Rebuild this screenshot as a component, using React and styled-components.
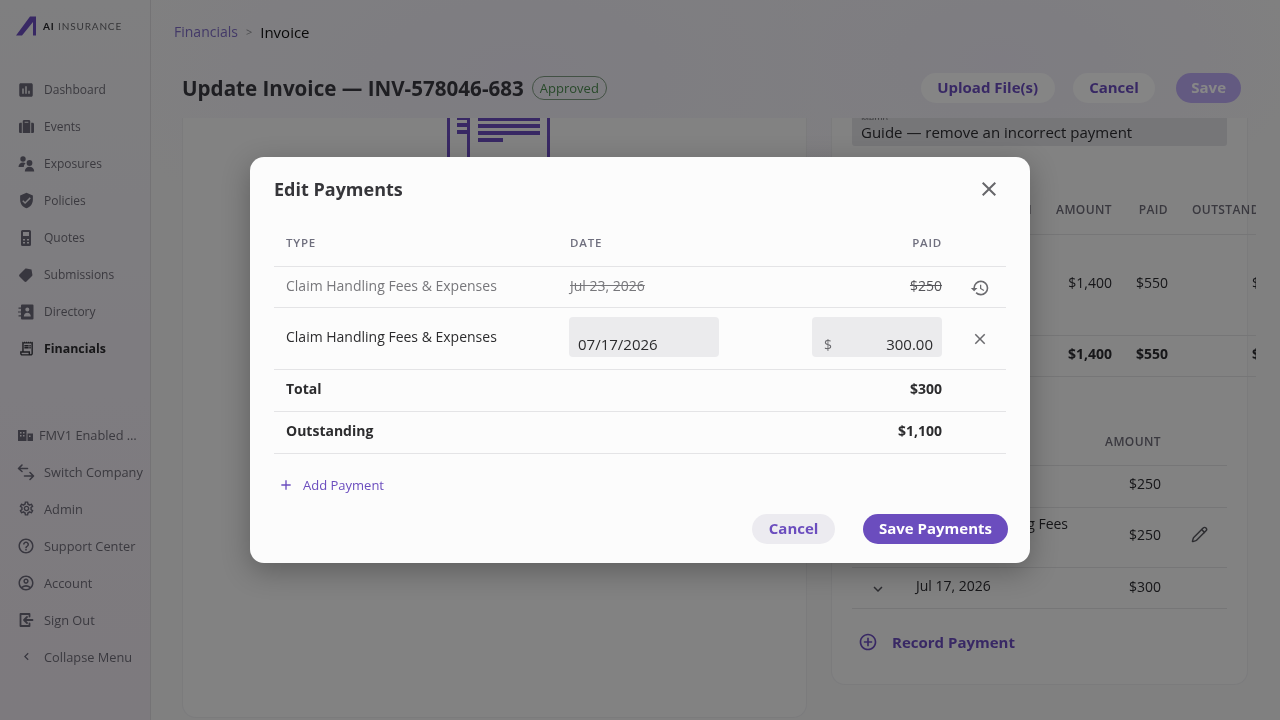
import React from 'react';
import styled, { createGlobalStyle } from 'styled-components';
import {
  MdAssessment,
  MdVerifiedUser,
  MdOutlineReceiptLong,
  MdOutlineSettings,
  MdHelpOutline,
  MdOutlineAccountCircle,
  MdHistory,
  MdClose,
  MdExpandMore,
  MdAddCircleOutline,
  MdAdd,
  MdChevronLeft,
  MdLabel,
} from 'react-icons/md';
import { FaSuitcase } from 'react-icons/fa';
import { LuPencil } from 'react-icons/lu';

const PURPLE = '#6b4dbe';

const GlobalStyle = createGlobalStyle`
  html, body {
    margin: 0;
    padding: 0;
    height: 100%;
    overflow: hidden;
  }
  body {
    font-family: "Open Sans", "Noto Sans", "Liberation Sans", sans-serif;
    background: #f1f1f3;
  }
  * {
    box-sizing: border-box;
  }
`;

const Shell = styled.div`
  display: flex;
  width: 1280px;
  height: 720px;
  overflow: hidden;
  background:
    radial-gradient(ellipse 420px 200px at 520px 70px, #eeebf5 0%, transparent 100%),
    radial-gradient(ellipse 300px 160px at 1000px 60px, #eeebf5 0%, transparent 100%),
    #f1f1f2;
`;

const Sidebar = styled.aside`
  flex: 0 0 151px;
  display: flex;
  flex-direction: column;
  border-right: 1px solid #dcdade;
  background: linear-gradient(180deg, #f0f0f1 0%, #eeeaf1 55%, #ede6ee 100%);
`;

const Brand = styled.div`
  display: flex;
  align-items: center;
  gap: 7px;
  height: 71px;
  padding: 0 0 20px 16px;
  will-change: transform;
`;

const BrandName = styled.span`
  font-family: "Lato", sans-serif;
  font-size: 10px;
  letter-spacing: 0.85px;
  color: #66666c;
  white-space: nowrap;

  b {
    font-weight: 700;
    color: #26262c;
  }
`;

const Nav = styled.nav`
  display: flex;
  flex-direction: column;
  margin-top: ${(p) => p.$top || 0}px;
  will-change: transform;
`;

const NavItem = styled.a`
  display: flex;
  align-items: center;
  height: 37px;
  padding-left: ${(p) => (p.$compact ? 17 : 18)}px;
  gap: ${(p) => (p.$compact ? 6 : 10)}px;
  font-size: ${(p) => (p.$large ? 12.8 : p.$active ? 12.4 : 12)}px;
  font-weight: ${(p) => (p.$active ? 700 : 400)};
  color: ${(p) => (p.$active ? '#2c2c30' : '#6f6d78')};
  white-space: nowrap;

  svg {
    flex: 0 0 auto;
    color: ${(p) => (p.$active ? '#3c3c44' : '#6a6878')};
  }
`;

const IconSlot = styled.span`
  display: flex;
  align-items: center;
  justify-content: center;
  flex: 0 0 16px;
  width: 16px;
  height: 16px;
`;

const Main = styled.main`
  flex: 1;
  min-width: 0;
  display: flex;
  flex-direction: column;
  will-change: transform;
`;

const Breadcrumb = styled.div`
  display: flex;
  align-items: center;
  height: 64px;
  padding: 0 0 1px 23px;
  font-size: 14px;
`;

const CrumbLink = styled.span`
  color: #7f6cc4;
`;

const CrumbSep = styled.span`
  margin: 0 8px;
  font-size: 11px;
  color: #8d8d94;
`;

const CrumbCurrent = styled.span`
  font-size: 15px;
  color: #111;
`;

const PageHeader = styled.header`
  display: flex;
  align-items: center;
  height: 54px;
  padding: 0 39px 6px 31px;
`;

const PageTitle = styled.h1`
  margin: 0;
  font-size: 20.6px;
  font-weight: 700;
  color: #3a3a40;
  white-space: nowrap;
`;

const StatusBadge = styled.span`
  margin-left: 8px;
  padding: 0 7px;
  height: 24px;
  line-height: 22px;
  font-size: 13px;
  color: #4c8a50;
  border: 1px solid #7e9a80;
  border-radius: 12px;
`;

const HeaderActions = styled.div`
  display: flex;
  align-items: center;
  margin-left: auto;
`;

const PillButton = styled.button`
  height: 30px;
  margin-left: ${(p) => p.$gap || 0}px;
  padding: 0 ${(p) => p.$pad || 16.5}px 2px;
  border: none;
  border-radius: 15px;
  font-family: inherit;
  font-size: 15px;
  font-weight: 700;
  white-space: nowrap;
  color: ${(p) => (p.$primary ? '#fff' : PURPLE)};
  background: ${(p) => (p.$primary ? PURPLE : '#ecebf0')};
`;

const HeaderPill = styled(PillButton)`
  background: #fbfbfc;
`;

const DisabledSave = styled(PillButton)`
  color: #fff;
  background: #bcaaf4;
`;

const Scroller = styled.div`
  flex: 1;
  min-height: 0;
  overflow: hidden;
  display: flex;
  align-items: flex-start;
  gap: 24px;
  padding-left: 31px;
`;

const PreviewCard = styled.section`
  flex: 0 0 625px;
  height: 600px;
  display: flex;
  justify-content: center;
  align-items: flex-start;
  padding-left: 8px;
  background: #f5f5f6;
  border: 1px solid #e9e9eb;
  border-top: none;
  border-radius: 0 0 14px 14px;
`;

const DetailCard = styled.section`
  flex: 0 0 417px;
  min-width: 0;
  height: 567px;
  padding: 0 20px;
  background: #f5f5f6;
  border: 1px solid #e9e9eb;
  border-top: none;
  border-radius: 0 0 14px 14px;
`;

const MemoField = styled.div`
  height: 28px;
  padding-left: 9px;
  background: #dfdfe3;
  border-radius: 0 0 3px 3px;
  font-size: 15px;
  line-height: 24px;
  color: #2c2c30;
`;

const MemoLabel = styled.span`
  display: block;
  height: 2px;
  overflow: hidden;
  font-size: 9px;
  line-height: 2px;
  color: #6a6a70;
`;

const ChargesWrap = styled.div`
  width: 404px;
  margin-top: 39px;
  overflow: hidden;
`;

const ChargesRow = styled.div`
  display: grid;
  grid-template-columns: 180px 56px 32px 92px;
  column-gap: 24px;
  align-items: center;
  width: 440px;
  height: ${(p) => p.$height}px;
  padding-bottom: ${(p) => p.$lift || 0}px;
  border-bottom: 1px solid #dfdfe1;
  font-size: 14px;
  font-weight: ${(p) => (p.$bold ? 700 : 400)};
  color: #2c2c30;
`;

const ColHead = styled.span`
  justify-self: ${(p) => p.$align || 'end'};
  font-size: 12px;
  font-weight: 600;
  letter-spacing: 0.4px;
  white-space: nowrap;
  color: #6e6c78;
`;

const Amount = styled.span`
  justify-self: end;
  white-space: nowrap;
`;

const PaymentsTable = styled.div`
  margin-top: 39px;
`;

const PaymentRow = styled.div`
  display: grid;
  grid-template-columns: 64px 1fr 59px 66px;
  align-items: center;
  height: ${(p) => p.$height}px;
  padding-top: ${(p) => p.$drop || 0}px;
  padding-bottom: ${(p) => p.$lift || 0}px;
  border-bottom: 1px solid #dfdfe1;
  font-size: 14px;
  color: #2c2c30;
`;

const PaymentLabel = styled.span`
  font-size: 14px;
  line-height: 20px;
  padding-left: ${(p) => p.$indent || 0}px;
`;

const ToggleCell = styled.span`
  display: flex;
  padding-left: 17px;
  padding-top: 5px;
  color: #55555c;
`;

const EditCell = styled.span`
  display: flex;
  padding-left: 30px;
  color: #55555c;
`;

const RecordPayment = styled.div`
  display: flex;
  align-items: center;
  gap: 14px;
  height: 70px;
  padding: 0 0 4px 6px;
  font-size: 15px;
  font-weight: 700;
  color: ${PURPLE};
`;

const Overlay = styled.div`
  position: fixed;
  inset: 0;
  display: flex;
  align-items: center;
  justify-content: center;
  background: rgba(0, 0, 0, 0.47);
`;

const Dialog = styled.div`
  width: 780px;
  padding: 16px 24px 19px;
  background: #fcfcfc;
  border-radius: 14px;
  box-shadow: 0 8px 28px rgba(0, 0, 0, 0.28);
  will-change: transform;
`;

const DialogHeader = styled.div`
  display: flex;
  align-items: center;
  justify-content: space-between;
  height: 32px;
  padding-right: 5px;
`;

const DialogTitle = styled.h2`
  margin: 0;
  font-size: 18px;
  font-weight: 700;
  color: #36363a;
`;

const CloseButton = styled.span`
  display: flex;
  color: #66666a;
`;

const Row = styled.div`
  display: grid;
  grid-template-columns: 284px 150px 1fr 64px;
  align-items: center;
  height: ${(p) => p.$height}px;
  padding: 0 0 4px 12px;
  border-bottom: 1px solid #e4e4e6;
  font-size: 14px;
  font-weight: ${(p) => (p.$bold ? 700 : 400)};
  color: ${(p) => (p.$muted ? '#77777b' : '#2c2c2e')};
`;

const HeadRow = styled(Row)`
  margin-top: 16px;
  padding-bottom: 3px;
`;

const DialogHead = styled.span`
  justify-self: ${(p) => p.$align || 'start'};
  font-size: 11.5px;
  font-weight: 600;
  letter-spacing: 0.8px;
  color: #6f6f7e;
`;

const Struck = styled.span`
  justify-self: ${(p) => p.$align || 'start'};
  text-decoration: line-through;
  color: ${(p) => p.$color || '#77777b'};
`;

const PaidCell = styled.span`
  justify-self: end;
`;

const ActionCell = styled.span`
  display: flex;
  justify-content: center;
  padding-left: 12px;
  padding-top: ${(p) => p.$drop || 0}px;
  color: #6a6a6e;
`;

const DateInput = styled.input`
  width: 150px;
  height: 40px;
  margin-left: -1px;
  padding: 15px 9px 0;
  border: none;
  border-radius: 4px;
  outline: none;
  background: #ebebed;
  font-family: inherit;
  font-size: 15px;
  color: #2c2c2e;
`;

const MoneyBox = styled.label`
  justify-self: end;
  display: flex;
  align-items: center;
  width: 130px;
  height: 40px;
  padding: 15px 9px 0 12px;
  border-radius: 4px;
  background: #ebebed;
  font-size: 14px;
  color: #6a6a6e;
`;

const MoneyInput = styled.input`
  flex: 1;
  min-width: 0;
  border: none;
  outline: none;
  padding: 0;
  background: transparent;
  text-align: right;
  font-family: inherit;
  font-size: 15px;
  color: #2c2c2e;
`;

const AddPayment = styled.div`
  display: flex;
  align-items: center;
  gap: 9px;
  height: 44px;
  margin-top: 9px;
  padding-left: 4px;
  font-size: 13px;
  color: ${PURPLE};
`;

const DialogFooter = styled.div`
  display: flex;
  justify-content: flex-end;
  margin-top: 7px;
  margin-right: -2px;
`;

const Logo = () => (
  <svg width="20" height="20" viewBox="0 0 20 20">
    <path d="M0 19.5 L14 0.5 H20 V19.5 H17 V6 L6 19.5 Z" fill="#6b4dbe" />
  </svg>
);

const Exposures = () => (
  <svg width="17" height="16" viewBox="0 0 17 16" fill="currentColor">
    <circle cx="5" cy="3" r="2.7" />
    <path d="M0.5 11c0-2.8 2-4.6 4.5-4.6 1 0 1.9.3 2.6.8C6.4 8.2 5.8 9.5 5.8 11H0.5Z" />
    <circle cx="11.5" cy="7" r="2.9" />
    <path d="M6.8 15.5c0-3 2.1-4.8 4.700-4.800s4.700 1.800 4.700 4.800H6.800Z" />
  </svg>
);

const Quotes = () => (
  <svg width="10" height="16" viewBox="0 0 10 16" fill="currentColor">
    <path
      fillRule="evenodd"
      d="M1.5 0h7A1.500 1.500 0 0 1 10 1.500v13A1.500 1.500 0 0 1 8.500 16h-7A1.500 1.500 0 0 1 0 14.500v-13A1.500 1.500 0 0 1 1.500 0ZM2 2v4h6V2H2Zm0 7v1.500h2V9H2Zm4 0v1.500h2V9H6Zm-4 3v1.500h2V12H2Zm4 0v1.500h2V12H6Z"
    />
  </svg>
);

const Directory = () => (
  <svg width="16" height="16" viewBox="0 0 16 16" fill="currentColor">
    <path
      fillRule="evenodd"
      d="M4 0.5h10.500A1 1 0 0 1 15.500 1.500v13a1 1 0 0 1-1 1H4a1 1 0 0 1-1-1v-13a1 1 0 0 1 1-1ZM9.300 3.500a2 2 0 1 0 0 4 2 2 0 0 0 0-4ZM5.800 12.500h7c0-2.300-1.500-3.800-3.500-3.800s-3.500 1.500-3.500 3.800Z"
    />
    <path d="M0.5 3.500h3.500v1.200H.5zM0 7.400h4v1.200H0zM.5 11.300h3.500v1.200H.5z" />
  </svg>
);

const Buildings = () => (
  <svg width="15" height="12" viewBox="0 0 15 12" fill="currentColor">
    <path d="M0 12V1h8.500v11H0Zm2-9v1.500h1.500V3H2Zm3 0v1.500h1.500V3H5ZM2 6v1.500h1.500V6H2Zm3 0v1.500h1.500V6H5ZM9.500 4.500H15V12H9.500V4.500Zm1.500 2V8h1.500V6.500H11Z" />
  </svg>
);

const SwapArrows = () => (
  <svg width="18" height="18" viewBox="0 0 18 18" fill="none" stroke="currentColor" strokeWidth="1.6" strokeLinecap="round" strokeLinejoin="round">
    <path d="M5 2 1.500 5.500 5 8.500M2 5.500h8.500M13 9.500l3.500 3.500-3.500 3.500M16 13H7.500" />
  </svg>
);

const SignOut = () => (
  <svg width="16" height="16" viewBox="0 0 16 16" fill="none" stroke="currentColor" strokeWidth="1.8" strokeLinecap="round" strokeLinejoin="round">
    <path d="M11.500 4.500V2H2.500v12h9v-2.500M14.500 8H6.500M9 5 6 8l3 3" />
  </svg>
);

const DocumentSketch = () => (
  <svg width="104" height="40" viewBox="0 0 104 40" fill="#6b4dbe">
    <rect x="0" y="0" width="3" height="40" />
    <rect x="20" y="0" width="3" height="40" />
    <rect x="100" y="0" width="3" height="40" />
    <rect x="10" y="0" width="10" height="2" />
    <rect x="10" y="5" width="10" height="4" />
    <rect x="10" y="12" width="10" height="4" />
    <rect x="31" y="0" width="62" height="3" />
    <rect x="31" y="6" width="62" height="4" />
    <rect x="31" y="13" width="62" height="4" />
    <rect x="31" y="20" width="25" height="4" />
  </svg>
);

const mainNav = [
  { label: 'Dashboard', icon: <MdAssessment size={18} /> },
  { label: 'Events', icon: <FaSuitcase size={15} /> },
  { label: 'Exposures', icon: <Exposures /> },
  { label: 'Policies', icon: <MdVerifiedUser size={17} /> },
  { label: 'Quotes', icon: <Quotes /> },
  { label: 'Submissions', icon: <MdLabel size={17} style={{ transform: 'rotate(-45deg)' }} /> },
  { label: 'Directory', icon: <Directory /> },
  { label: 'Financials', icon: <MdOutlineReceiptLong size={17} />, active: true },
];

const bottomNav = [
  { label: 'Switch Company', icon: <SwapArrows /> },
  { label: 'Admin', icon: <MdOutlineSettings size={17} /> },
  { label: 'Support Center', icon: <MdHelpOutline size={18} /> },
  { label: 'Account', icon: <MdOutlineAccountCircle size={18} /> },
  { label: 'Sign Out', icon: <SignOut /> },
  { label: 'Collapse Menu', icon: <MdChevronLeft size={15} /> },
];

export default function App() {
  return (
    <>
      <GlobalStyle />
      <Shell>
        <Sidebar>
          <Brand>
            <Logo />
            <BrandName>
              <b>AI</b> INSURANCE
            </BrandName>
          </Brand>
          <Nav>
            {mainNav.map((item) => (
              <NavItem key={item.label} $active={item.active}>
                <IconSlot>{item.icon}</IconSlot>
                {item.label}
              </NavItem>
            ))}
          </Nav>
          <Nav $top={49}>
            <NavItem $compact $large>
              <IconSlot>
                <Buildings />
              </IconSlot>
              FMV1 Enabled …
            </NavItem>
            {bottomNav.map((item) => (
              <NavItem key={item.label} $large>
                <IconSlot>{item.icon}</IconSlot>
                {item.label}
              </NavItem>
            ))}
          </Nav>
        </Sidebar>

        <Main>
          <Breadcrumb>
            <CrumbLink>Financials</CrumbLink>
            <CrumbSep>&gt;</CrumbSep>
            <CrumbCurrent>Invoice</CrumbCurrent>
          </Breadcrumb>
          <PageHeader>
            <PageTitle>Update Invoice — INV-578046-683</PageTitle>
            <StatusBadge>Approved</StatusBadge>
            <HeaderActions>
              <HeaderPill>Upload File(s)</HeaderPill>
              <HeaderPill $gap={18}>Cancel</HeaderPill>
              <DisabledSave $gap={21} $pad={15}>Save</DisabledSave>
            </HeaderActions>
          </PageHeader>
          <Scroller>
            <PreviewCard>
              <DocumentSketch />
            </PreviewCard>
            <DetailCard>
              <MemoField>
                <MemoLabel>Memo</MemoLabel>
                Guide — remove an incorrect payment
              </MemoField>
              <ChargesWrap>
                <ChargesRow $height={50} $lift={1}>
                  <ColHead>DESCRIPTION</ColHead>
                  <ColHead>AMOUNT</ColHead>
                  <ColHead>PAID</ColHead>
                  <ColHead $align="start">OUTSTANDING</ColHead>
                </ChargesRow>
                <ChargesRow $height={101} $lift={6}>
                  <span />
                  <Amount>$1,400</Amount>
                  <Amount>$550</Amount>
                  <Amount>$850</Amount>
                </ChargesRow>
                <ChargesRow $height={41} $lift={6} $bold>
                  <span />
                  <Amount>$1,400</Amount>
                  <Amount>$550</Amount>
                  <Amount>$850</Amount>
                </ChargesRow>
              </ChargesWrap>
              <PaymentsTable>
                <PaymentRow $height={50} $drop={2}>
                  <span />
                  <span />
                  <ColHead>AMOUNT</ColHead>
                </PaymentRow>
                <PaymentRow $height={42} $lift={7}>
                  <span />
                  <PaymentLabel>Jul 23, 2026</PaymentLabel>
                  <Amount>$250</Amount>
                </PaymentRow>
                <PaymentRow $height={60} $lift={7}>
                  <span />
                  <PaymentLabel $indent={20}>
                    Claim Handling Fees
                    <br />
                    &amp; Expenses
                  </PaymentLabel>
                  <Amount>$250</Amount>
                  <EditCell>
                    <LuPencil size={17} />
                  </EditCell>
                </PaymentRow>
                <PaymentRow $height={41} $lift={4}>
                  <ToggleCell>
                    <MdExpandMore size={18} />
                  </ToggleCell>
                  <PaymentLabel>Jul 17, 2026</PaymentLabel>
                  <Amount>$300</Amount>
                </PaymentRow>
              </PaymentsTable>
              <RecordPayment>
                <MdAddCircleOutline size={20} />
                Record Payment
              </RecordPayment>
            </DetailCard>
          </Scroller>
        </Main>
      </Shell>

      <Overlay>
        <Dialog>
          <DialogHeader>
            <DialogTitle>Edit Payments</DialogTitle>
            <CloseButton>
              <MdClose size={24} />
            </CloseButton>
          </DialogHeader>
          <HeadRow $height={46}>
            <DialogHead>TYPE</DialogHead>
            <DialogHead>DATE</DialogHead>
            <DialogHead $align="end">PAID</DialogHead>
            <span />
          </HeadRow>
          <Row $height={41} $muted>
            <span>Claim Handling Fees &amp; Expenses</span>
            <Struck>Jul 23, 2026</Struck>
            <Struck $align="end" $color="#55555a">$250</Struck>
            <ActionCell $drop={6}>
              <MdHistory size={20} />
            </ActionCell>
          </Row>
          <Row $height={62}>
            <span>Claim Handling Fees &amp; Expenses</span>
            <DateInput readOnly value="07/17/2026" />
            <MoneyBox>
              $
              <MoneyInput readOnly value="300.00" />
            </MoneyBox>
            <ActionCell $drop={4}>
              <MdClose size={18} />
            </ActionCell>
          </Row>
          <Row $height={42} $bold>
            <span>Total</span>
            <span />
            <PaidCell>$300</PaidCell>
            <span />
          </Row>
          <Row $height={42} $bold>
            <span>Outstanding</span>
            <span />
            <PaidCell>$1,100</PaidCell>
            <span />
          </Row>
          <AddPayment>
            <MdAdd size={16} />
            Add Payment
          </AddPayment>
          <DialogFooter>
            <PillButton>Cancel</PillButton>
            <PillButton $primary $gap={28} $pad={16}>Save Payments</PillButton>
          </DialogFooter>
        </Dialog>
      </Overlay>
    </>
  );
}
